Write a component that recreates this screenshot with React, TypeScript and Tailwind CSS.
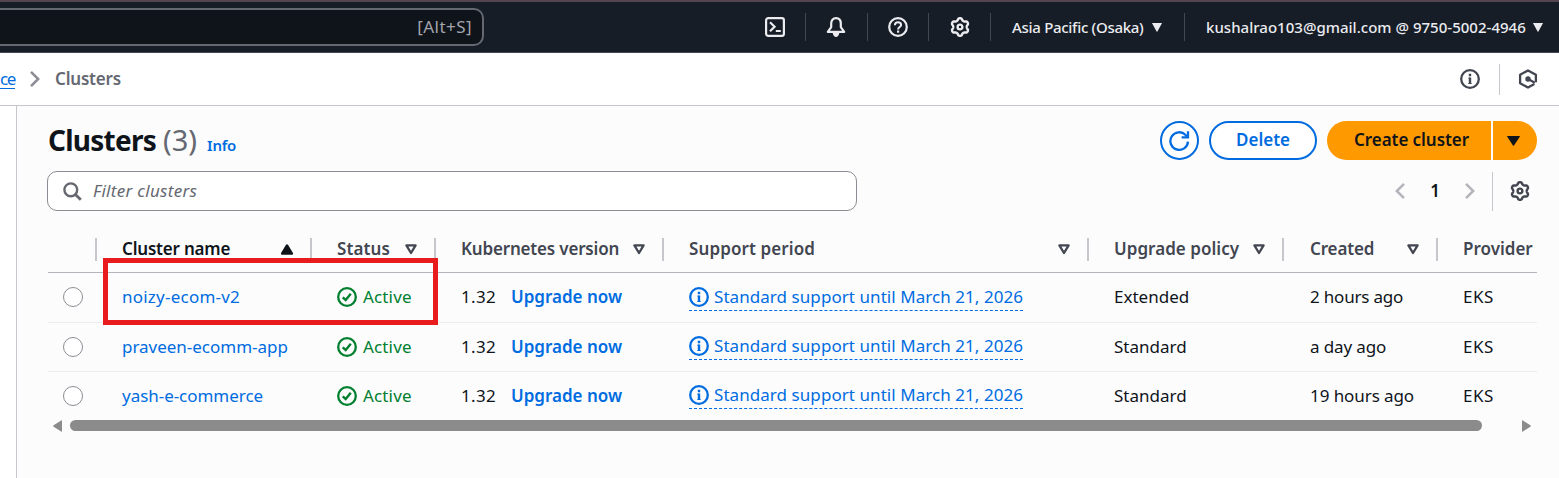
import React from "react";

const gearPath = (() => {
  const pts: string[] = [];
  for (let i = 0; i < 120; i++) {
    const t = (i / 120) * Math.PI * 2;
    const c = Math.cos(6 * t);
    const r = 7.8 + 1.05 * Math.sign(c) * Math.pow(Math.abs(c), 0.6);
    pts.push(`${(10 + r * Math.sin(t)).toFixed(2)} ${(10 - r * Math.cos(t)).toFixed(2)}`);
  }
  return `M${pts.join("L")}Z`;
})();

function Gear() {
  return (
    <svg className="h-5 w-5 shrink-0" viewBox="0 0 20 20" fill="none" stroke="currentColor" strokeWidth="2.4" strokeLinejoin="round">
      <path d={gearPath} />
      <circle cx="10" cy="10" r="2.4" />
    </svg>
  );
}

function TerminalIcon() {
  return (
    <svg className="h-5 w-5 shrink-0" viewBox="0 0 20 20" fill="none" stroke="currentColor" strokeWidth="2.2">
      <rect x="1.1" y="1.1" width="17.8" height="17.8" rx="2.2" />
      <path d="M5 5.2L9.6 9.7L5 14.2M10.8 14H15.8" />
    </svg>
  );
}

function Bell() {
  return (
    <svg className="h-5 w-5 shrink-0" viewBox="0 0 20 20" fill="none" stroke="currentColor" strokeWidth="2.2" strokeLinejoin="round">
      <path d="M10 1.2C6.9 1.2 5.2 3.4 5.2 6.6V10.2L1.8 14.9H18.2L14.8 10.2V6.6C14.8 3.4 13.1 1.2 10 1.2Z" />
      <path d="M6.6 15.5H13.4C13 18.4 11.7 20 10 20S7 18.4 6.6 15.5Z" fill="currentColor" stroke="none" />
    </svg>
  );
}

function Help() {
  return (
    <svg className="h-5 w-5 shrink-0" viewBox="0 0 20 20" fill="none" stroke="currentColor" strokeWidth="2.2">
      <circle cx="10" cy="10" r="8.8" />
      <path d="M6.9 8.2C6.9 6.2 8.2 5.2 10 5.2S13.1 6.3 13.1 7.9C13.1 10 10.1 10.1 10.1 12.4" strokeWidth="2" />
      <path d="M10.1 13.5V15.7" />
    </svg>
  );
}

function InfoIcon() {
  return (
    <svg className="h-5 w-5 shrink-0" viewBox="0 0 20 20" fill="none" stroke="currentColor" strokeWidth="2.3">
      <circle cx="10" cy="10" r="8.8" />
      <path d="M10 4.8V7.2M10 8.6V15" strokeWidth="2.4" />
      <path d="M8.4 9.2H10M8.4 14.5H11.6" strokeWidth="1" />
    </svg>
  );
}

function HexIcon() {
  return (
    <svg className="h-5 w-5 shrink-0" viewBox="0 0 20 20" fill="none" stroke="currentColor" strokeWidth="2.3">
      <path d="M17.9 13.2V5.7L10 1.4L2.1 5.7V14.3L10 18.6L16.4 15.1" strokeLinejoin="round" />
      <circle cx="10" cy="10" r="2.7" fill="currentColor" stroke="none" />
      <path d="M10.5 10.3L16.8 13.8" strokeWidth="2.2" />
    </svg>
  );
}

function CheckCircle() {
  return (
    <svg className="h-5 w-5 shrink-0" viewBox="0 0 20 20" fill="none" stroke="currentColor" strokeWidth="2.3">
      <circle cx="10" cy="10" r="8.8" />
      <path d="M5.7 10.3L8.7 13L13.8 6.8" strokeWidth="2.4" />
    </svg>
  );
}

function Chevron({ left = false }: { left?: boolean }) {
  return (
    <svg className="h-[18px] w-3 shrink-0" viewBox="0 0 12 18" fill="none" stroke="currentColor" strokeWidth="2.5">
      <path d={left ? "M10 1.8L2.8 9L10 16.2" : "M2 1.8L9.2 9L2 16.2"} />
    </svg>
  );
}

function Caret({ className }: { className: string }) {
  return (
    <svg className={className} viewBox="0 0 10 9" preserveAspectRatio="none" fill="currentColor">
      <path d="M.3 0H9.7Q10.2 0 9.8.6L5.4 8.5Q5 9 4.6 8.5L.2.6Q-.2 0 .3 0Z" />
    </svg>
  );
}

function SortIcon({ sorted }: { sorted?: boolean }) {
  return (
    <svg className="h-[11px] w-3 shrink-0" viewBox="0 0 12 11" fill="none" stroke="currentColor" strokeWidth="2.3" strokeLinejoin="round">
      {sorted ? <path d="M6 1.4L11 9.6H1Z" fill="currentColor" /> : <path d="M6 9L1.4 1.4H10.6Z" />}
    </svg>
  );
}

const TopDivider = () => <div className="h-7 w-px shrink-0 bg-[#424650]" />;

const COLS = "grid grid-cols-[49px_215px_124px_228px_425px_195px_154px_99px]";

const headers = [
  { label: "Cluster name", tracking: "tracking-[-0.2px]", sorted: true },
  { label: "Status", tracking: "tracking-[0.1px]" },
  { label: "Kubernetes version", tracking: "tracking-[-0.18px]" },
  { label: "Support period", tracking: "tracking-[0.1px]" },
  { label: "Upgrade policy", tracking: "tracking-[0.04px]" },
  { label: "Created", tracking: "pl-px tracking-[-0.15px]" },
];

const rows = [
  { name: "noizy-ecom-v2", tracking: "tracking-[0.23px]", policy: "Extended", created: "2 hours ago", createdTracking: "tracking-[-0.2px]", layout: "h-[50px] border-b pb-0.5", support: "pt-0.5" },
  { name: "praveen-ecomm-app", tracking: "tracking-[-0.02px]", policy: "Standard", created: "a day ago", createdTracking: "tracking-[-0.13px]", layout: "h-[49px] border-b", support: "pb-0.5" },
  { name: "yash-e-commerce", tracking: "tracking-[-0.04px]", policy: "Standard", created: "19 hours ago", createdTracking: "tracking-[-0.08px]", layout: "h-[48px]", support: "pb-0.5" },
];

export default function App() {
  return (
    <div className="flex h-[478px] w-full flex-col overflow-hidden bg-white font-['Noto_Sans',sans-serif] text-[17px] leading-6 text-[#0f141a]">
      <header className="flex h-[53px] shrink-0 justify-between border-t-2 border-b border-t-[#55454f] border-b-[#424650] bg-[#161d26]">
        <div className="mt-[6px] flex h-[38px] w-[484px] items-center justify-end rounded-r-[10px] border-2 border-l-0 border-[#656871] bg-[#0f141a] pr-[10px] tracking-[0.45px] text-[#a4a4ad]">
          [Alt+S]
        </div>
        <div className="flex h-[50px] items-center pr-4 text-[15px] font-medium text-[#ebebf0]">
          <TerminalIcon />
          <div className="flex w-[41px] justify-center"><TopDivider /></div>
          <Bell />
          <div className="flex w-[42px] justify-center"><TopDivider /></div>
          <Help />
          <div className="flex w-[42px] justify-center pr-px"><TopDivider /></div>
          <Gear />
          <div className="flex w-[42px] justify-center pr-px"><TopDivider /></div>
          <span className="w-[140px] whitespace-nowrap tracking-[-0.3px]">Asia Pacific (Osaka)</span>
          <Caret className="h-[9px] w-[10px]" />
          <div className="flex w-[44px] justify-center"><TopDivider /></div>
          <span className="w-[327px] whitespace-nowrap tracking-[0.02px]">kushalrao103@gmail.com @ 9750-5002-4946</span>
          <Caret className="h-[9px] w-[10px]" />
        </div>
      </header>

      <nav className="flex h-[53px] shrink-0 items-center border-b border-[#c6c6cd]">
        <span className="w-[15px] border-b border-[#006ce0] leading-[19px] tracking-[-1.4px] text-[#006ce0]">ce</span>
        <span className="ml-[14px] flex text-[#8c8c94]"><Chevron /></span>
        <span className="ml-[14px] font-semibold tracking-[-0.19px] text-[#656871]">Clusters</span>
        <div className="ml-auto flex items-center pr-[21px] text-[#424650]">
          <InfoIcon />
          <div className="mr-[18px] ml-[19px] h-[31px] w-px bg-[#c6c6cd]" />
          <HexIcon />
        </div>
      </nav>

      <div className="flex min-h-0 flex-1 pl-4">
        <main className="flex min-w-0 flex-1 flex-col border-l border-[#c6c6cd] bg-[#fcfcfd] pr-[22px] pl-[30px]">
          <div className="mt-[15px] flex h-[39px] items-center">
            <h1 className="flex items-baseline pt-1 pl-px leading-9">
              <span className="text-[28px] font-bold tracking-[-0.75px]">Clusters</span>
              <span className="ml-[7px] text-[29px] text-[#656871]">(3)</span>
              <a className="ml-[10px] text-[15px] font-semibold tracking-[-0.2px] text-[#006ce0]">Info</a>
            </h1>
            <div className="ml-auto flex h-full items-center">
              <button className="flex h-[39px] w-[39px] items-center justify-center rounded-full border-2 border-[#006ce0] bg-white pr-px text-[#006ce0]">
                <svg className="h-[22px] w-[22px]" viewBox="0 0 22 22" fill="none" stroke="currentColor" strokeWidth="2.3">
                  <path d="M20 11.6A8.8 8.8 0 1 1 17.6 5L19.6 7" />
                  <path d="M20 1.2V7.4H13.6" />
                </svg>
              </button>
              <button className="ml-[10px] flex h-[39px] w-[108px] items-center justify-center rounded-full border-2 border-[#006ce0] bg-white pb-px font-semibold text-[#006ce0]">Delete</button>
              <button className="ml-[10px] h-[39px] w-[164px] rounded-l-full bg-[#ff9900] pb-px pl-[5px] font-semibold tracking-[-0.06px]">Create cluster</button>
              <button className="ml-[2px] flex h-[39px] w-[44px] items-center rounded-r-full bg-[#ff9900] pl-[14px]">
                <Caret className="mt-px h-[10px] w-[13px]" />
              </button>
            </div>
          </div>

          <div className="mt-[11px] flex h-10 items-center justify-between">
            <div className="flex h-10 w-[810px] items-center rounded-[10px] border border-[#8c8c94] bg-white pl-[15px] text-[#656871]">
              <svg className="mt-px h-[19px] w-[19px]" viewBox="0 0 19 19" fill="none" stroke="currentColor" strokeWidth="2.4">
                <circle cx="7.8" cy="7.8" r="6.4" />
                <path d="M12.4 12.4L17.8 17.8" strokeWidth="2.8" />
              </svg>
              <span className="ml-[11px] tracking-[0.3px] italic">Filter clusters</span>
            </div>
            <div className="flex items-center pr-[7px]">
              <span className="flex text-[#b4b4bb]"><Chevron left /></span>
              <span className="w-[58px] text-center font-semibold">1</span>
              <span className="flex text-[#b4b4bb]"><Chevron /></span>
              <div className="mr-[17px] ml-4 h-[39px] w-px bg-[#c6c6cd]" />
              <span className="text-[#424650]"><Gear /></span>
            </div>
          </div>

          <section className="relative mt-[19px] ml-px">
            <div className={`${COLS} h-[43px] border-b border-[#b4b4bb] font-semibold whitespace-nowrap text-[#424650]`}>
              <div className="mt-2 h-[23px] border-r-2 border-[#c6c6cd]" />
              {headers.map((h) => (
                <div key={h.label} className={`mt-2 flex h-[23px] items-center justify-between border-r-2 border-[#c6c6cd] pr-[17px] pl-[25px] ${h.sorted ? "text-[#0f141a]" : ""}`}>
                  <span className={`pb-0.5 ${h.tracking}`}>{h.label}</span>
                  <SortIcon sorted={h.sorted} />
                </div>
              ))}
              <div className="mt-2 flex h-[23px] items-center pb-0.5 pl-[25px]">Provider</div>
            </div>
            {rows.map((r) => (
              <div key={r.name} className={`${COLS} ${r.layout} items-center border-[#ebebf0] whitespace-nowrap`}>
                <div className="pl-[15px]"><div className="h-5 w-5 rounded-full border border-[#8c8c94] bg-white" /></div>
                <div className={`pl-[25px] text-[#006ce0] ${r.tracking}`}>{r.name}</div>
                <div className="flex items-center pl-[25px] tracking-[0.15px] text-[#00802f]"><CheckCircle /><span className="ml-[6px]">Active</span></div>
                <div className="flex pl-[25px]"><span className="w-[50px] tracking-[0.3px]">1.32</span><a className="font-semibold text-[#006ce0]">Upgrade now</a></div>
                <div className={`flex pl-[25px] ${r.support}`}>
                  <span className="inline-flex h-[27px] w-[334px] items-center border-b border-dashed border-[#006ce0] text-[#006ce0]">
                    <InfoIcon /><span className="ml-[5px] tracking-[0.06px]">Standard support until March 21, 2026</span>
                  </span>
                </div>
                <div className="pl-[25px]">{r.policy}</div>
                <div className={`pl-[26px] ${r.createdTracking}`}>{r.created}</div>
                <div className="pl-[25px] tracking-[0.5px]">EKS</div>
              </div>
            ))}
            <div className="pointer-events-none absolute top-[28px] left-[55px] h-[67px] w-[335px] border-[5px] border-[#e81c1c]" />
          </section>

          <div className="-mt-px flex h-3 items-center pl-[6px] text-[#8b8b8b]">
            <svg className="mt-px h-3 w-[9px]" viewBox="0 0 9 12" fill="currentColor"><path d="M9 .8V11.2Q9 12 8.2 11.6L.6 6.8Q-.2 6 .6 5.2L8.2.4Q9 0 9 .8Z" /></svg>
            <div className="ml-2 h-[11px] w-[1412px] rounded-full bg-[#8b8b8b]" />
            <svg className="mt-px ml-10 h-3 w-[9px]" viewBox="0 0 9 12" fill="currentColor"><path d="M0 .8V11.2Q0 12 .8 11.6L8.4 6.8Q9.2 6 8.4 5.2L.8.4Q0 0 0 .8Z" /></svg>
          </div>
        </main>
      </div>
    </div>
  );
}
